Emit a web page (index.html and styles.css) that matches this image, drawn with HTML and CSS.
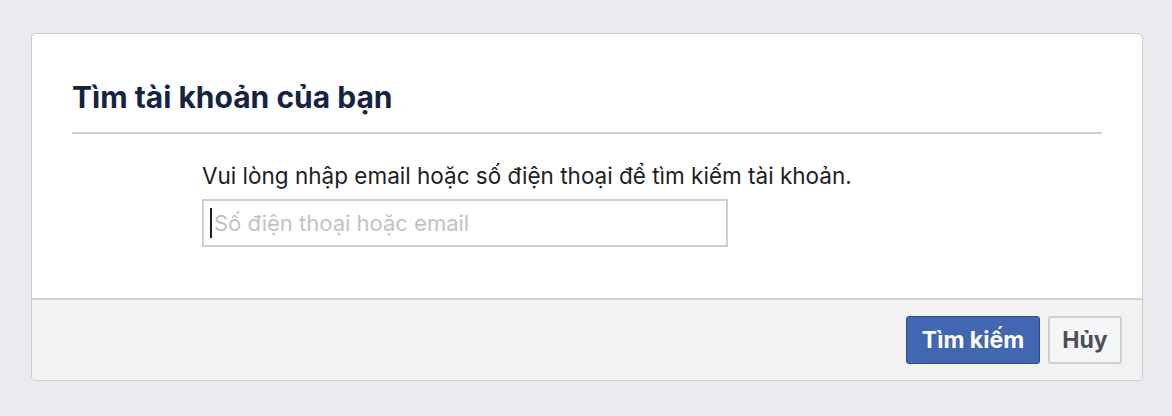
FILE: index.html
```html
<!DOCTYPE html>
<html lang="vi">
<head>
<meta charset="utf-8">
<link rel="stylesheet" href="styles.css">
</head>
<body>
<div class="page">
  <div class="card">
    <div class="card-body">
      <h2 class="title">Tìm tài khoản của bạn</h2>
      <div class="content">
        <div class="prompt">Vui lòng nhập email hoặc số điện thoại để tìm kiếm tài khoản.</div>
        <div class="field"><span class="caret"></span><span class="placeholder">Số điện thoại hoặc email</span></div>
      </div>
    </div>
    <div class="card-footer">
      <button class="btn btn-primary">Tìm kiếm</button>
      <button class="btn btn-secondary">Hủy</button>
    </div>
  </div>
</div>
</body>
</html>
```
FILE: styles.css
```css
* { box-sizing: border-box; }
html, body { margin: 0; padding: 0; }
body {
  background: #e9ebee;
  font-family: Inter, "Noto Sans", sans-serif;
  width: 1172px;
  height: 416px;
  overflow: hidden;
}
.page {
  padding: 33px 29px 0 31px;
}
.card {
  width: 1112px;
  height: 348px;
  background: #fff;
  border: 1px solid #c9cacc;
  border-radius: 5px;
  display: flex;
  flex-direction: column;
  overflow: hidden;
}
.card-body {
  flex: 1;
  padding: 0 40px 0 40px;
}
.title {
  margin: 0;
  padding-top: 44px;
  padding-bottom: 16px;
  font-size: 30px;
  line-height: 38px;
  font-weight: 700;
  color: #162443;
  border-bottom: 2px solid #d0d1d4;
}
.content {
  padding-left: 130px;
  padding-top: 28px;
}
.prompt {
  font-size: 22.5px;
  line-height: 28px;
  color: #1c1e21;
}
.field {
  margin-top: 9px;
  width: 526px;
  height: 48px;
  border: 2px solid #ccd0d5;
  display: flex;
  align-items: center;
  padding-left: 6px;
}
.caret {
  width: 2px;
  height: 30px;
  background: #1c1e21;
  margin-right: 2px;
}
.placeholder {
  font-size: 22px;
  color: #bec3c9;
}
.card-footer {
  height: 82px;
  background: #f2f2f2;
  border-top: 2px solid #d0d1d4;
  display: flex;
  justify-content: flex-end;
  align-items: flex-start;
  gap: 8px;
  padding: 16px 20px 0 0;
}
.btn {
  height: 48px;
  font-family: Inter, "Noto Sans", sans-serif;
  font-size: 23px;
  font-weight: 700;
  border-radius: 3px;
  padding: 0;
  cursor: pointer;
}
.btn-primary {
  width: 134px;
  background: #4267b2;
  color: #fff;
  border: 1px solid #2d4a86;
}
.btn-secondary {
  width: 74px;
  background: #f5f6f7;
  color: #4b4f56;
  border: 2px solid #ccd0d5;
}
```
